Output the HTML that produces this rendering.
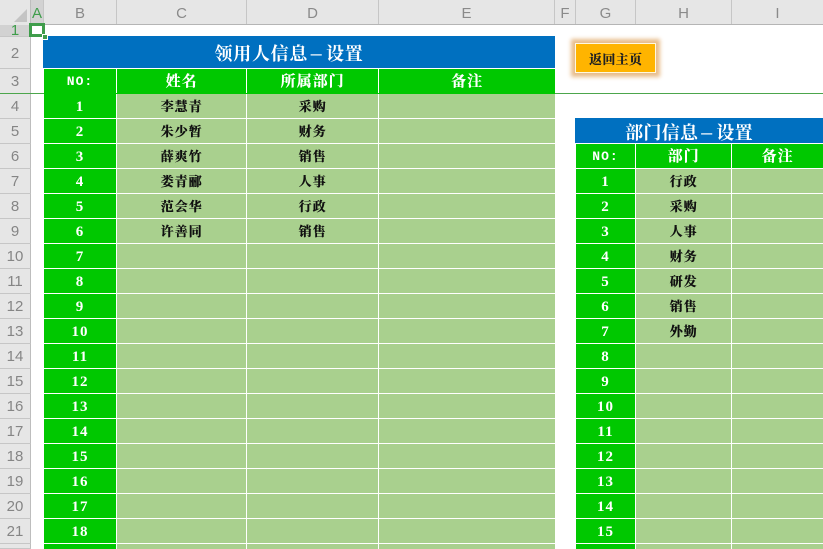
<!DOCTYPE html>
<html><head><meta charset="utf-8">
<style>
html,body{margin:0;padding:0;width:823px;height:549px;overflow:hidden;background:#fff}
body{position:relative;font-family:"Liberation Serif","Noto Serif CJK SC",serif}
.abs{position:absolute}
.ch{position:absolute;top:0;height:24px;text-align:center;font:15px/27px "Liberation Sans",sans-serif;color:#8a8a8a;border-right:1px solid #c6c6c6;box-sizing:border-box;background:#e6e6e6}
.rh{position:absolute;left:0;width:31px;text-align:center;font:15px "Liberation Sans",sans-serif;color:#858585;border-bottom:1px solid #c6c6c6;border-right:1px solid #bdbdbd;box-sizing:border-box;background:#e6e6e6}
table{position:absolute;border-collapse:separate;border-spacing:0;table-layout:fixed}
td{padding:0;height:25px;box-sizing:border-box;border-right:1px solid #fff;border-bottom:1px solid #fff;text-align:center;background:#a9d08e;font:bold 13px/24px "Noto Serif CJK SC",serif;letter-spacing:1px;text-shadow:.4px 0 0 #111;color:#111;overflow:hidden;white-space:nowrap}
td.n{background:#00c800;color:#fff;text-shadow:none;font:bold 15px/22px "Liberation Serif",serif;letter-spacing:1px;padding-top:2px}
tr.h td{background:#00c800;color:#fff;text-shadow:.3px 0 0 #fff;font:bold 15px/24px "Noto Serif CJK SC",serif;letter-spacing:1px}
tr.h td.n{font:bold 13px/22px "Liberation Mono",monospace;letter-spacing:1px;text-shadow:none;padding-top:2px}
.e{border-right:0}
tr.s td{height:5px;line-height:5px;padding:0;border-bottom:0}
.t{position:absolute;background:#0070c0;color:#fff;text-align:center;font:bold 18px "Noto Serif CJK SC",serif;box-sizing:border-box;overflow:hidden}
.t span{display:inline-block;width:18px;text-align:center;transform:scaleX(2.2)}
</style></head><body>

<div class="abs" style="left:0;top:0;width:823px;height:25px;background:#e6e6e6;border-bottom:1px solid #b5b5b5;box-sizing:border-box"></div>
<div class="abs" style="left:0;top:0;width:31px;height:549px;background:#e6e6e6;border-right:1px solid #bdbdbd;box-sizing:border-box"></div>

<svg class="abs" style="left:13px;top:8px" width="15" height="15"><polygon points="14,1 14,14 1,14" fill="#c4c4c4"/></svg>
<div class="ch" style="left:31px;width:13px;background:#d2d2d2;color:#3f9d4b;border-bottom:2px solid #3f9d4b;height:25px">A</div>
<div class="ch" style="left:44px;width:73px">B</div>
<div class="ch" style="left:117px;width:130px">C</div>
<div class="ch" style="left:247px;width:132px">D</div>
<div class="ch" style="left:379px;width:176px">E</div>
<div class="ch" style="left:555px;width:21px">F</div>
<div class="ch" style="left:576px;width:60px">G</div>
<div class="ch" style="left:636px;width:96px">H</div>
<div class="ch" style="left:732px;width:91px;border-right:0">I</div>

<div class="rh" style="top:25px;height:12px;line-height:12px;background:#d2d2d2;color:#3f9d4b;overflow:hidden">1</div>
<div class="rh" style="top:37px;height:32px;line-height:33px">2</div>
<div class="rh" style="top:69px;height:25px;line-height:26px">3</div>
<div class="rh" style="top:94px;height:25px;line-height:26px">4</div>
<div class="rh" style="top:119px;height:25px;line-height:26px">5</div>
<div class="rh" style="top:144px;height:25px;line-height:26px">6</div>
<div class="rh" style="top:169px;height:25px;line-height:26px">7</div>
<div class="rh" style="top:194px;height:25px;line-height:26px">8</div>
<div class="rh" style="top:219px;height:25px;line-height:26px">9</div>
<div class="rh" style="top:244px;height:25px;line-height:26px">10</div>
<div class="rh" style="top:269px;height:25px;line-height:26px">11</div>
<div class="rh" style="top:294px;height:25px;line-height:26px">12</div>
<div class="rh" style="top:319px;height:25px;line-height:26px">13</div>
<div class="rh" style="top:344px;height:25px;line-height:26px">14</div>
<div class="rh" style="top:369px;height:25px;line-height:26px">15</div>
<div class="rh" style="top:394px;height:25px;line-height:26px">16</div>
<div class="rh" style="top:419px;height:25px;line-height:26px">17</div>
<div class="rh" style="top:444px;height:25px;line-height:26px">18</div>
<div class="rh" style="top:469px;height:25px;line-height:26px">19</div>
<div class="rh" style="top:494px;height:25px;line-height:26px">20</div>
<div class="rh" style="top:519px;height:25px;line-height:26px">21</div>
<div class="rh" style="top:544px;height:5px"></div>

<div class="t" style="left:43px;top:36px;width:512px;height:32px;line-height:34px;padding-right:20px;letter-spacing:.7px">领用人信息<span>-</span>设置</div>

<table style="left:44px;top:69px;width:511px">
<colgroup><col style="width:73px"><col style="width:130px"><col style="width:132px"><col style="width:176px"></colgroup>
<tr class="h"><td class="n">NO:</td><td>姓名</td><td>所属部门</td><td class="e">备注</td></tr>
<tr><td class="n">1</td><td>李慧青</td><td>采购</td><td class="e"></td></tr>
<tr><td class="n">2</td><td>朱少暂</td><td>财务</td><td class="e"></td></tr>
<tr><td class="n">3</td><td>薛爽竹</td><td>销售</td><td class="e"></td></tr>
<tr><td class="n">4</td><td>娄青郦</td><td>人事</td><td class="e"></td></tr>
<tr><td class="n">5</td><td>范会华</td><td>行政</td><td class="e"></td></tr>
<tr><td class="n">6</td><td>许善同</td><td>销售</td><td class="e"></td></tr>
<tr><td class="n">7</td><td></td><td></td><td class="e"></td></tr>
<tr><td class="n">8</td><td></td><td></td><td class="e"></td></tr>
<tr><td class="n">9</td><td></td><td></td><td class="e"></td></tr>
<tr><td class="n">10</td><td></td><td></td><td class="e"></td></tr>
<tr><td class="n">11</td><td></td><td></td><td class="e"></td></tr>
<tr><td class="n">12</td><td></td><td></td><td class="e"></td></tr>
<tr><td class="n">13</td><td></td><td></td><td class="e"></td></tr>
<tr><td class="n">14</td><td></td><td></td><td class="e"></td></tr>
<tr><td class="n">15</td><td></td><td></td><td class="e"></td></tr>
<tr><td class="n">16</td><td></td><td></td><td class="e"></td></tr>
<tr><td class="n">17</td><td></td><td></td><td class="e"></td></tr>
<tr><td class="n">18</td><td></td><td></td><td class="e"></td></tr>
<tr class="s"><td class="n"></td><td></td><td></td><td class="e"></td></tr>
</table>

<div class="t" style="left:575px;top:118px;width:248px;height:25px;line-height:28px;padding-right:20px;letter-spacing:.3px">部门信息<span>-</span>设置</div>

<table style="left:576px;top:144px;width:247px">
<colgroup><col style="width:60px"><col style="width:96px"><col style="width:91px"></colgroup>
<tr class="h"><td class="n">NO:</td><td>部门</td><td class="e">备注</td></tr>
<tr><td class="n">1</td><td>行政</td><td class="e"></td></tr>
<tr><td class="n">2</td><td>采购</td><td class="e"></td></tr>
<tr><td class="n">3</td><td>人事</td><td class="e"></td></tr>
<tr><td class="n">4</td><td>财务</td><td class="e"></td></tr>
<tr><td class="n">5</td><td>研发</td><td class="e"></td></tr>
<tr><td class="n">6</td><td>销售</td><td class="e"></td></tr>
<tr><td class="n">7</td><td>外勤</td><td class="e"></td></tr>
<tr><td class="n">8</td><td></td><td class="e"></td></tr>
<tr><td class="n">9</td><td></td><td class="e"></td></tr>
<tr><td class="n">10</td><td></td><td class="e"></td></tr>
<tr><td class="n">11</td><td></td><td class="e"></td></tr>
<tr><td class="n">12</td><td></td><td class="e"></td></tr>
<tr><td class="n">13</td><td></td><td class="e"></td></tr>
<tr><td class="n">14</td><td></td><td class="e"></td></tr>
<tr><td class="n">15</td><td></td><td class="e"></td></tr>
<tr class="s"><td class="n"></td><td></td><td class="e"></td></tr>
</table>

<div class="abs" style="left:0;top:93px;width:823px;height:1px;background:#4ca64c"></div>
<div class="abs" style="left:44px;top:93px;width:511px;height:1px;background:#00c800"></div>

<div class="abs" style="left:575px;top:43px;width:81px;height:30px;box-sizing:border-box;background:#ffb400;border:1px solid #fff8e0;box-shadow:0 0 4px 4px #e8bd8c;text-align:center;font:bold 13px/29px 'Noto Serif CJK SC',serif;letter-spacing:.3px;text-shadow:.3px 0 0 #222;color:#222">返回主页</div>

<div class="abs" style="left:29px;top:23px;width:16px;height:14px;box-sizing:border-box;border:3px solid #3f9d4b;background:transparent"></div>
<div class="abs" style="left:42px;top:34px;width:4px;height:4px;background:#3f9d4b;border:1px solid #fff"></div>

</body></html>
